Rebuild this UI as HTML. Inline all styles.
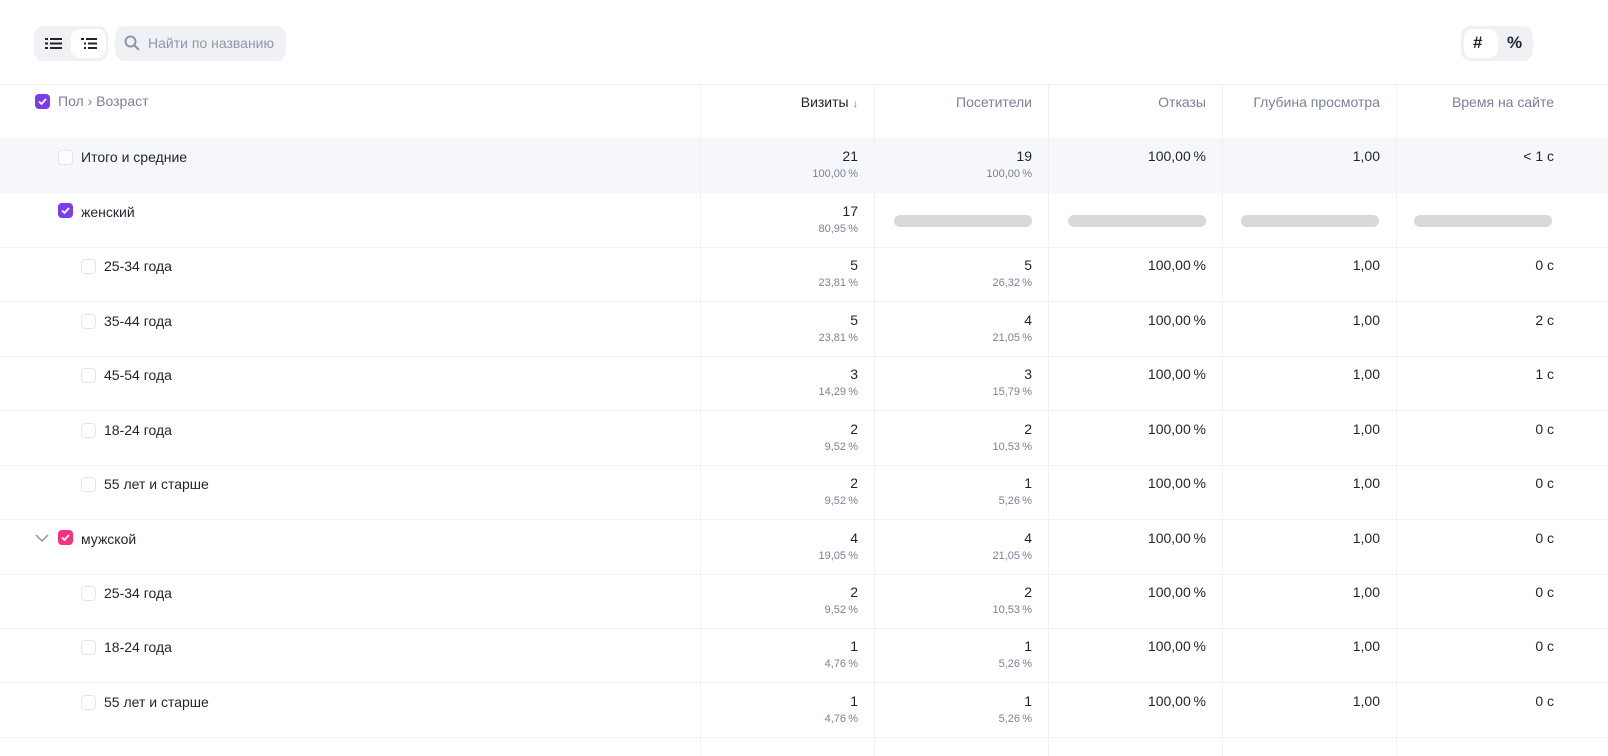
<!DOCTYPE html>
<html><head><meta charset="utf-8"><style>
*{margin:0;padding:0;box-sizing:border-box}
body{width:1608px;height:756px;background:#fff;font-family:"Liberation Sans",sans-serif;color:#1f2430;position:relative;overflow:hidden}
.abs{position:absolute}
.hl{position:absolute;left:0;width:1608px;height:1px;background:#eef0f3}
.vl{position:absolute;top:84px;width:1px;height:672px;background:#f0f1f4}
.row{position:absolute;left:0;width:1608px;height:55px;border-bottom:1px solid #eef0f3}
.lab{position:absolute;top:11px;font-size:14px;color:#1f2430}
.cb{position:absolute;top:12px;width:15px;height:15px;border:1px solid #e3e5ea;border-radius:4px;background:#fff}
.cbc{position:absolute;width:15px;height:15px;border-radius:4px;background:#7a3cec}
.v{position:absolute;top:10px;font-size:14px;text-align:right;width:150px}
.p{position:absolute;top:30px;font-size:11px;color:#7a8299;text-align:right;width:150px}
.sk{position:absolute;top:22px;width:138px;height:12px;border-radius:6px;background:#d9d9d9}
.h{position:absolute;top:94px;font-size:14px;color:#7a8299;text-align:right;width:170px}
</style></head><body>
<div class="abs" style="left:34px;top:26px;width:74px;height:35px;border-radius:10px;background:#eff1f5"></div>
<div class="abs" style="left:71px;top:29px;width:35px;height:29px;border-radius:9px;background:#fff"></div>
<svg class="abs" style="left:45px;top:37px" width="18" height="13"><g fill="#1f2430"><rect x="0" y="1" width="3" height="2"/><rect x="5" y="1" width="12" height="2"/><rect x="0" y="5.5" width="3" height="2"/><rect x="5" y="5.5" width="12" height="2"/><rect x="0" y="10" width="3" height="2"/><rect x="5" y="10" width="12" height="2"/></g></svg>
<svg class="abs" style="left:81px;top:37px" width="18" height="13"><g fill="#1f2430"><rect x="0" y="1" width="3" height="2"/><rect x="5" y="1" width="11" height="2"/><rect x="3" y="5.5" width="2" height="2"/><rect x="7" y="5.5" width="9" height="2"/><rect x="3" y="10" width="2" height="2"/><rect x="7" y="10" width="9" height="2"/></g></svg>
<div class="abs" style="left:115px;top:26px;width:171px;height:35px;border-radius:10px;background:#eff1f5"></div>
<svg class="abs" style="left:124px;top:35px" width="16" height="16"><circle cx="6.5" cy="6.5" r="5" fill="none" stroke="#8f96a8" stroke-width="2"/><path d="M10.5 10.5L15 15" stroke="#8f96a8" stroke-width="2"/></svg>
<div class="abs" style="left:148px;top:35px;font-size:14px;color:#8f96a8">Найти по названию</div>
<div class="abs" style="left:1461px;top:26px;width:72px;height:35px;border-radius:10px;background:#eff1f5"></div>
<div class="abs" style="left:1464px;top:29px;width:34px;height:29px;border-radius:9px;background:#fff"></div>
<div class="abs" style="left:1473px;top:33px;font-size:17px;font-weight:bold">#</div>
<div class="abs" style="left:1507px;top:33px;font-size:17px;font-weight:bold">%</div>
<div class="hl" style="top:84px"></div>
<div class="abs" style="left:0;top:138px;width:1608px;height:55px;background:#f6f7fa"></div>
<div class="vl" style="left:700px"></div><div class="vl" style="left:874px"></div><div class="vl" style="left:1048px"></div><div class="vl" style="left:1222px"></div><div class="vl" style="left:1396px"></div>
<div class="cbc" style="left:35px;top:94px"><svg width="15" height="15"><path d="M4 7.5l2.5 2.5 4.5-5" stroke="#fff" stroke-width="1.8" fill="none"/></svg></div>
<div class="abs" style="left:58px;top:93px;font-size:14px;color:#7a8299">Пол › Возраст</div>
<div class="h" style="left:688px;color:#1f2430">Визиты <span style="font-size:11px;color:#7a8299">↓</span></div>
<div class="h" style="left:862px">Посетители</div>
<div class="h" style="left:1036px">Отказы</div>
<div class="h" style="left:1210px">Глубина просмотра</div>
<div class="h" style="left:1384px">Время на сайте</div>

<div class="row" style="top:138px;border-bottom:none"><div class="cb" style="left:58px"></div><div class="lab" style="left:81px">Итого и средние</div>
<div class="v" style="left:708px">21</div><div class="p" style="left:708px">100,00&#8239;%</div><div class="v" style="left:882px">19</div><div class="p" style="left:882px">100,00&#8239;%</div><div class="v" style="left:1056px">100,00&#8239;%</div><div class="v" style="left:1230px">1,00</div><div class="v" style="left:1404px">&lt; 1 с</div></div>

<div class="row" style="top:193px"><div class="cbc" style="left:58px;top:10px"><svg width="15" height="15"><path d="M4 7.5l2.5 2.5 4.5-5" stroke="#fff" stroke-width="1.8" fill="none"/></svg></div><div class="lab" style="left:81px">женский</div>
<div class="v" style="left:708px">17</div><div class="p" style="left:708px">80,95&#8239;%</div>
<div class="sk" style="left:894px"></div><div class="sk" style="left:1068px"></div><div class="sk" style="left:1241px"></div><div class="sk" style="left:1414px"></div></div>

<div class="row" style="top:247px"><div class="cb" style="left:81px"></div><div class="lab" style="left:104px">25-34 года</div><div class="v" style="left:708px">5</div><div class="p" style="left:708px">23,81&#8239;%</div><div class="v" style="left:882px">5</div><div class="p" style="left:882px">26,32&#8239;%</div><div class="v" style="left:1056px">100,00&#8239;%</div><div class="v" style="left:1230px">1,00</div><div class="v" style="left:1404px">0 с</div></div>
<div class="row" style="top:302px"><div class="cb" style="left:81px"></div><div class="lab" style="left:104px">35-44 года</div><div class="v" style="left:708px">5</div><div class="p" style="left:708px">23,81&#8239;%</div><div class="v" style="left:882px">4</div><div class="p" style="left:882px">21,05&#8239;%</div><div class="v" style="left:1056px">100,00&#8239;%</div><div class="v" style="left:1230px">1,00</div><div class="v" style="left:1404px">2 с</div></div>
<div class="row" style="top:356px"><div class="cb" style="left:81px"></div><div class="lab" style="left:104px">45-54 года</div><div class="v" style="left:708px">3</div><div class="p" style="left:708px">14,29&#8239;%</div><div class="v" style="left:882px">3</div><div class="p" style="left:882px">15,79&#8239;%</div><div class="v" style="left:1056px">100,00&#8239;%</div><div class="v" style="left:1230px">1,00</div><div class="v" style="left:1404px">1 с</div></div>
<div class="row" style="top:411px"><div class="cb" style="left:81px"></div><div class="lab" style="left:104px">18-24 года</div><div class="v" style="left:708px">2</div><div class="p" style="left:708px">9,52&#8239;%</div><div class="v" style="left:882px">2</div><div class="p" style="left:882px">10,53&#8239;%</div><div class="v" style="left:1056px">100,00&#8239;%</div><div class="v" style="left:1230px">1,00</div><div class="v" style="left:1404px">0 с</div></div>
<div class="row" style="top:465px"><div class="cb" style="left:81px"></div><div class="lab" style="left:104px">55 лет и старше</div><div class="v" style="left:708px">2</div><div class="p" style="left:708px">9,52&#8239;%</div><div class="v" style="left:882px">1</div><div class="p" style="left:882px">5,26&#8239;%</div><div class="v" style="left:1056px">100,00&#8239;%</div><div class="v" style="left:1230px">1,00</div><div class="v" style="left:1404px">0 с</div></div>
<div class="row" style="top:520px"><svg class="abs" style="left:35px;top:13px" width="14" height="10"><path d="M1 2l6 6 6-6" stroke="#9aa0b0" stroke-width="1.6" fill="none"/></svg><div class="cbc" style="left:58px;top:10px;background:#f7307f"><svg width="15" height="15"><path d="M4 7.5l2.5 2.5 4.5-5" stroke="#fff" stroke-width="1.8" fill="none"/></svg></div><div class="lab" style="left:81px">мужской</div><div class="v" style="left:708px">4</div><div class="p" style="left:708px">19,05&#8239;%</div><div class="v" style="left:882px">4</div><div class="p" style="left:882px">21,05&#8239;%</div><div class="v" style="left:1056px">100,00&#8239;%</div><div class="v" style="left:1230px">1,00</div><div class="v" style="left:1404px">0 с</div></div>
<div class="row" style="top:574px"><div class="cb" style="left:81px"></div><div class="lab" style="left:104px">25-34 года</div><div class="v" style="left:708px">2</div><div class="p" style="left:708px">9,52&#8239;%</div><div class="v" style="left:882px">2</div><div class="p" style="left:882px">10,53&#8239;%</div><div class="v" style="left:1056px">100,00&#8239;%</div><div class="v" style="left:1230px">1,00</div><div class="v" style="left:1404px">0 с</div></div>
<div class="row" style="top:628px"><div class="cb" style="left:81px"></div><div class="lab" style="left:104px">18-24 года</div><div class="v" style="left:708px">1</div><div class="p" style="left:708px">4,76&#8239;%</div><div class="v" style="left:882px">1</div><div class="p" style="left:882px">5,26&#8239;%</div><div class="v" style="left:1056px">100,00&#8239;%</div><div class="v" style="left:1230px">1,00</div><div class="v" style="left:1404px">0 с</div></div>
<div class="row" style="top:683px"><div class="cb" style="left:81px"></div><div class="lab" style="left:104px">55 лет и старше</div><div class="v" style="left:708px">1</div><div class="p" style="left:708px">4,76&#8239;%</div><div class="v" style="left:882px">1</div><div class="p" style="left:882px">5,26&#8239;%</div><div class="v" style="left:1056px">100,00&#8239;%</div><div class="v" style="left:1230px">1,00</div><div class="v" style="left:1404px">0 с</div></div>
</body></html>
